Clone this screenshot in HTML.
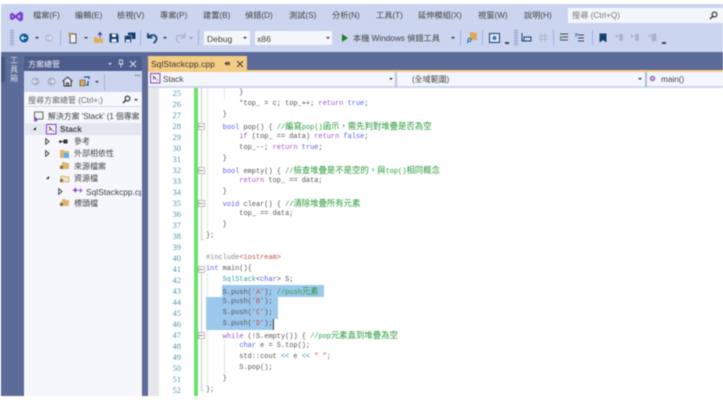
<!DOCTYPE html>
<html lang="zh-Hant"><head><meta charset="utf-8">
<style>
html,body{margin:0;padding:0;background:#fff}
#w{position:relative;width:723px;height:400px;overflow:hidden;background:#fff;font-family:"Liberation Sans","Noto Sans CJK TC",sans-serif;filter:blur(.4px)}
#w div,#w svg,#w span.a{position:absolute}
.m{top:9px;font-size:8.2px;line-height:12px;color:#444;white-space:nowrap;transform:translateY(1px)}
.t{font-size:8.2px;line-height:12px;color:#444;white-space:nowrap;transform:translateY(1px)}
.sep{width:1px;background:#9fb0dc}
.dd{width:0;height:0;border-left:2px solid transparent;border-right:2px solid transparent;border-top:2px solid #333}
.code{position:absolute;top:88px;left:206px;display:grid;grid-auto-rows:11.02px;font-family:"Liberation Mono","Noto Sans CJK TC",monospace;font-size:6.95px;color:#555}
#w .code div,#w .ln div{position:static;white-space:pre;height:11px;line-height:11px}
.ln{position:absolute;top:88px;left:160px;width:21px;text-align:right;display:grid;grid-auto-rows:11.02px;font-family:"Liberation Serif",serif;font-size:8.5px;color:#4a9bb5}
.k{color:#5560f0}.c{color:#a050d0}.g{color:#2a9a3a}.h{font-family:"Noto Sans CJK TC",sans-serif;font-size:8.4px}.y{color:#3a9ab5}.s{color:#c05050}.p{color:#888}
.fb{left:198px;width:5px;height:5px;border:1px solid #bbb;background:#fff}
</style></head><body><div id="w">
<!-- chrome backgrounds -->
<div style="left:1px;top:4px;width:722px;height:48px;background:#ccd5f0"></div>
<div style="left:1px;top:52px;width:722px;height:344px;background:#5d6b99"></div>
<!-- logo -->
<svg style="left:9px;top:9px" width="15" height="15" viewBox="0 0 15 15"><path fill-rule="evenodd" d="M1 5L3.5 3.8L6.5 6.3L11 2.5L14 4V11L11 12.5L6.5 8.7L3.5 11.2L1 10ZM3 6.3V8.7L4.5 7.5ZM11 5.5L8.5 7.5L11 9.5Z" fill="#7b3fd0"/></svg>
<!-- menu -->
<div class="m" style="left:33px">檔案(F)</div><div class="m" style="left:75px">編輯(E)</div><div class="m" style="left:117px">檢視(V)</div><div class="m" style="left:160px">專案(P)</div><div class="m" style="left:203px">建置(B)</div><div class="m" style="left:245px">偵錯(D)</div><div class="m" style="left:289px">測試(S)</div><div class="m" style="left:332px">分析(N)</div><div class="m" style="left:376px">工具(T)</div><div class="m" style="left:418px">延伸模組(X)</div><div class="m" style="left:478px">視窗(W)</div><div class="m" style="left:524px">說明(H)</div>
<div style="left:568px;top:8px;width:155px;height:15px;background:#f5f6fc"></div>
<div class="t" style="left:572px;top:9px;color:#777">搜尋 (Ctrl+Q)</div>
<svg style="left:709px;top:11px" width="9" height="9" viewBox="0 0 9 9"><circle cx="5.5" cy="3.5" r="2.4" fill="none" stroke="#333" stroke-width="1.2"/><path d="M3.8 5.2L1 8" stroke="#333" stroke-width="1.4"/></svg>
<!-- toolbar -->
<div style="left:10px;top:30px;width:4px;height:15px;background:repeating-linear-gradient(#8f9dc5 0 1px,#ccd5f0 1px 2px)"></div>
<svg style="left:19px;top:33px" width="10" height="10" viewBox="0 0 10 10"><circle cx="5" cy="5" r="4.5" fill="#0e5a96"/><path d="M2.5 5H7.5M4.5 3L2.5 5L4.5 7" stroke="#fff" fill="none"/></svg>
<div class="dd" style="left:35px;top:37px"></div>
<svg style="left:44px;top:33px" width="10" height="10" viewBox="0 0 10 10"><circle cx="5" cy="5" r="4" fill="#b9c0d2"/><path d="M2.5 5H7.5M5.5 3L7.5 5L5.5 7" stroke="#e6e9f3" fill="none"/></svg>
<div class="sep" style="left:60px;top:30px;height:15px"></div>
<svg style="left:67px;top:31px" width="12" height="13" viewBox="0 0 12 13"><path d="M3 3H9V12H3Z" fill="#eef0f5" stroke="#555"/><path d="M2 1L3 3L1 4M5 1V3" stroke="#d99a30" fill="none"/></svg>
<div class="dd" style="left:84px;top:37px"></div>
<svg style="left:93px;top:31px" width="11" height="13" viewBox="0 0 11 13"><path d="M1 6H4L5 7H10V12H1Z" fill="#e0b060"/><path d="M5 4L7 1.5L9 4M7 2V6" stroke="#3a3a8a" fill="none"/></svg>
<svg style="left:109px;top:33px" width="10" height="10" viewBox="0 0 10 10"><path d="M0.5 0.5H8L9.5 2V9.5H0.5Z" fill="#14406e"/><path d="M3 1H7V4H3ZM2.5 6H7.5V9H2.5Z" fill="#eef0f7"/></svg>
<svg style="left:124px;top:32px" width="12" height="11" viewBox="0 0 12 11"><path d="M4 0.5H11.5V7H4Z" fill="#14406e"/><path d="M0.5 3.5H7.5V10.5H0.5Z" fill="#14406e" stroke="#ccd5f0" stroke-width=".6"/><path d="M2 7.5H6V10H2Z" fill="#eef0f7"/></svg>
<div class="sep" style="left:140px;top:30px;height:15px"></div>
<svg style="left:147px;top:32px" width="11" height="12" viewBox="0 0 11 12"><path d="M1 1V5.5H5.5M1.5 5C4 2 9.5 2.5 9.5 6.5C9.5 8.5 8.5 10 6.5 11" fill="none" stroke="#14406e" stroke-width="1.7"/></svg>
<div class="dd" style="left:163px;top:37px"></div>
<svg style="left:175px;top:32px" width="11" height="12" viewBox="0 0 11 12"><path d="M10 1V5.5H5.5M9.5 5C7 2 1.5 2.5 1.5 6.5C1.5 8.5 2.5 10 4.5 11" fill="none" stroke="#aab2c8" stroke-width="1.2"/></svg>
<div class="dd" style="left:189px;top:37px;border-top-color:#8890a8"></div>
<div class="sep" style="left:198px;top:30px;height:15px"></div>
<div style="left:204px;top:31px;width:46px;height:14px;background:#f4f6fc"></div>
<div class="t" style="left:207px;top:32px;font-size:8.6px">Debug</div>
<div class="dd" style="left:243px;top:37px"></div>
<div style="left:255px;top:31px;width:77px;height:14px;background:#f4f6fc"></div>
<div class="t" style="left:257px;top:32px;font-size:8.6px">x86</div>
<div class="dd" style="left:326px;top:37px"></div>
<svg style="left:341px;top:33px" width="8" height="10" viewBox="0 0 8 10"><path d="M1 1L7 5L1 9Z" fill="#1d7d2a"/></svg>
<div class="t" style="left:353px;top:32px;font-size:8.2px">本機 Windows 偵錯工具</div>
<div class="dd" style="left:451px;top:37px"></div>
<div class="sep" style="left:460px;top:30px;height:15px"></div>
<svg style="left:466px;top:31px" width="12" height="13" viewBox="0 0 12 13"><path d="M4 1H7L8 2H11V9H4Z" fill="#dca850"/><circle cx="3.5" cy="9" r="1.6" fill="none" stroke="#1c6fb5"/><path d="M2.5 10.2L1 12" stroke="#1c6fb5"/></svg>
<div class="sep" style="left:482px;top:30px;height:15px"></div>
<svg style="left:489px;top:33px" width="11" height="10" viewBox="0 0 11 10"><rect x=".5" y=".5" width="10" height="9" fill="#dfe6f5" stroke="#14406e"/><circle cx="5.5" cy="5" r="2" fill="#2a7fc0"/></svg>
<div style="left:505px;top:42px;width:4px;height:1.5px;background:#444"></div>
<div style="left:514px;top:30px;width:4px;height:15px;background:repeating-linear-gradient(#8f9dc5 0 1px,#ccd5f0 1px 2px)"></div>
<svg style="left:521px;top:32px" width="11" height="11" viewBox="0 0 11 11"><path d="M1 1V9H10M3 5H10V9H3Z" fill="none" stroke="#14406e"/></svg>
<svg style="left:538px;top:32px" width="11" height="11" viewBox="0 0 11 11"><path d="M1 4H10M1 7H10M3 1V10M7 1V10" stroke="#b0b8cc"/></svg>
<div class="sep" style="left:553px;top:30px;height:15px"></div>
<svg style="left:559px;top:33px" width="10" height="9" viewBox="0 0 10 9"><path d="M1 1H9M3 4H9M1 7H9" stroke="#444"/><path d="M1 3V6L3 4.5Z" fill="#1d7d2a"/></svg>
<svg style="left:575px;top:33px" width="10" height="9" viewBox="0 0 10 9"><path d="M3 2H9M3 5H9M3 8H9" stroke="#444"/><path d="M0 1H3M0 3H2" stroke="#1c6fb5"/></svg>
<div class="sep" style="left:592px;top:30px;height:15px"></div>
<svg style="left:599px;top:33px" width="8" height="10" viewBox="0 0 8 10"><path d="M0.5 0.5H7.5V9.5L4 7L0.5 9.5Z" fill="#14406e"/></svg>
<svg style="left:614px;top:33px" width="10" height="9" viewBox="0 0 10 9"><path d="M5 1H9V8H5ZM1 3L4 1V5Z" fill="#aab3c8"/></svg>
<svg style="left:630px;top:33px" width="10" height="9" viewBox="0 0 10 9"><path d="M5 1H9V8H5ZM1 1L4 3L1 5Z" fill="#aab3c8"/></svg>
<svg style="left:647px;top:33px" width="10" height="9" viewBox="0 0 10 9"><path d="M5 1H9V8H5ZM1 1L4 4M4 1L1 4" fill="#aab3c8" stroke="#aab3c8" stroke-width=".7"/></svg>
<div style="left:662px;top:42px;width:4px;height:1.5px;background:#444"></div>
<!-- left toolbox tab -->
<div style="left:1px;top:57px;width:4px;height:25px;background:#47547f"></div>
<div style="left:9px;top:56px;width:10px;font-size:8px;line-height:9px;color:#d5dbee;text-align:center">工具箱</div>
<!-- solution explorer -->
<div style="left:24px;top:56px;width:118px;height:340px;background:#f6f7fd"></div>
<div style="left:24px;top:56px;width:118px;height:15px;background:#4d5c8c"></div>
<div class="t" style="left:28px;top:58px;color:#f0f2fa;font-size:8px">方案總管</div>
<div class="dd" style="left:108px;top:63px;border-top-color:#d5dbee"></div>
<svg style="left:117px;top:59px" width="8" height="9" viewBox="0 0 8 9"><path d="M2.5 1H5.5V5H2.5ZM1.5 5H6.5M4 5V8.5" fill="none" stroke="#d5dbee" stroke-width=".9"/></svg>
<svg style="left:129px;top:60px" width="8" height="8" viewBox="0 0 8 8"><path d="M1 1L7 7M7 1L1 7" stroke="#d5dbee" stroke-width="1.1"/></svg>
<div style="left:24px;top:71px;width:118px;height:21px;background:#ccd5f0"></div>
<svg style="left:31px;top:77px" width="9" height="9" viewBox="0 0 9 9"><circle cx="4.5" cy="4.5" r="4" fill="#aab2c6"/><path d="M2 4.5H7M4 2.5L2 4.5L4 6.5" stroke="#e6e9f3" fill="none"/></svg>
<svg style="left:47px;top:77px" width="9" height="9" viewBox="0 0 9 9"><circle cx="4.5" cy="4.5" r="4" fill="#aab2c6"/><path d="M2 4.5H7M5 2.5L7 4.5L5 6.5" stroke="#e6e9f3" fill="none"/></svg>
<svg style="left:62px;top:76px" width="11" height="11" viewBox="0 0 11 11"><path d="M0.5 5.5L5.5 1L10.5 5.5M2 5V10H9V5M4.5 10V7H6.5V10" fill="#eef0f7" stroke="#333"/></svg>
<svg style="left:79px;top:76px" width="12" height="11" viewBox="0 0 12 11"><path d="M1 4H6V10H1Z" fill="#dca850" stroke="#444" stroke-width=".6"/><path d="M5 1H10V3M9 5V9H7" fill="none" stroke="#14507e" stroke-width="1.2"/></svg>
<div class="dd" style="left:95px;top:81px"></div>
<div class="sep" style="left:104px;top:75px;height:15px"></div>
<div style="left:135px;top:75px;width:5px;height:1px;border-top:1px dotted #444"></div>
<div style="left:25px;top:92px;width:116px;height:14px;background:#f7f8fd;border-bottom:1px solid #cfd6ee"></div>
<div class="t" style="left:28px;top:94px;color:#666;font-size:8px">搜尋方案總管 (Ctrl+;)</div>
<svg style="left:122px;top:95px" width="9" height="9" viewBox="0 0 9 9"><circle cx="5.5" cy="3.5" r="2.4" fill="none" stroke="#333" stroke-width="1.2"/><path d="M3.8 5.2L1 8" stroke="#333" stroke-width="1.4"/></svg>
<div class="dd" style="left:134px;top:99px"></div>
<div style="left:25px;top:123px;width:116px;height:12px;background:#e4e6f1"></div>
<svg style="left:33px;top:111px" width="11" height="11" viewBox="0 0 11 11"><rect x="1.5" y="1" width="8.5" height="7" fill="#f2f3f8" stroke="#444" stroke-width=".8"/><path d="M2 6L4 9.5L1 10" fill="#8a3fc9" stroke="#8a3fc9"/></svg>
<div class="t" style="left:48px;top:110px;font-size:7.9px;width:93px;overflow:hidden">解決方案 'Stack' (1 個專案</div>
<div style="left:33px;top:127px;border-left:3px solid transparent;border-bottom:3px solid #222"></div>
<svg style="left:46px;top:124px" width="11" height="11" viewBox="0 0 11 11"><rect x=".5" y=".5" width="9.5" height="9.5" fill="#f4f0f8" stroke="#8a3fc9"/><path d="M3 3L6 6M7 7H8M3 6H4" stroke="#333"/></svg>
<div class="t" style="left:60px;top:123px;font-weight:bold;font-size:8.2px">Stack</div>
<svg style="left:45px;top:138px" width="5" height="7" viewBox="0 0 5 7"><path d="M.7 .7L4 3.5L.7 6.3Z" fill="#fff" stroke="#333" stroke-width=".9"/></svg>
<svg style="left:59px;top:139px" width="10" height="5" viewBox="0 0 10 5"><rect x="0" y="1.5" width="2.4" height="2.4" fill="#333"/><rect x="4.5" y="0.5" width="4" height="4" fill="#333"/><path d="M2 2.5H5" stroke="#333"/></svg>
<div class="t" style="left:74px;top:135px;font-size:8px">參考</div>
<svg style="left:45px;top:150px" width="5" height="7" viewBox="0 0 5 7"><path d="M.7 .7L4 3.5L.7 6.3Z" fill="#fff" stroke="#333" stroke-width=".9"/></svg>
<svg style="left:60px;top:148px" width="10" height="11" viewBox="0 0 10 11"><path d="M0 2H3.5L4.5 3H9V10H0Z" fill="#dcb574"/><rect x="4" y="5" width="5" height="5" fill="#5db0e8"/></svg>
<div class="t" style="left:74px;top:147px;font-size:8px">外部相依性</div>
<svg style="left:60px;top:160px" width="10" height="10" viewBox="0 0 10 10"><path d="M0 5H2V2H5L6 3H9V9H0Z" fill="#dcb574"/><path d="M0 6H3V9H0Z" fill="#8a6d36"/></svg>
<div class="t" style="left:74px;top:160px;font-size:8px">來源檔案</div>
<div style="left:46px;top:176px;border-left:3px solid transparent;border-bottom:3px solid #222"></div>
<svg style="left:60px;top:173px" width="10" height="10" viewBox="0 0 10 10"><path d="M1 3H4L5 4H9V9H1Z" fill="#f0e4c8" stroke="#cfa860" stroke-width=".8"/><path d="M0 6H3V9H0Z" fill="#8a6d36"/></svg>
<div class="t" style="left:74px;top:172px;font-size:8px">資源檔</div>
<svg style="left:58px;top:188px" width="5" height="7" viewBox="0 0 5 7"><path d="M.7 .7L4 3.5L.7 6.3Z" fill="#fff" stroke="#333" stroke-width=".9"/></svg>
<div style="left:72px;top:185px;font-size:8px;line-height:12px;color:#8a3fc9;font-weight:bold;letter-spacing:-.5px">✦+</div>
<div class="t" style="left:86px;top:185px;font-size:8.4px;width:55px;overflow:hidden">SqlStackcpp.cpp</div>
<svg style="left:60px;top:197px" width="10" height="10" viewBox="0 0 10 10"><path d="M0 5H2V2H5L6 3H9V9H0Z" fill="#dcb574"/><path d="M0 6H3V9H0Z" fill="#8a6d36"/></svg>
<div class="t" style="left:74px;top:197px;font-size:8px">標頭檔</div>
<!-- editor tab -->
<div style="left:148px;top:56px;width:99px;height:15px;background:#f5cc84"></div>
<div class="t" style="left:151px;top:57px;font-size:8.4px;color:#333;letter-spacing:.1px">SqlStackcpp.cpp</div>
<svg style="left:224px;top:60px" width="7" height="7" viewBox="0 0 7 7"><path d="M2 2V5M2 3.5H6M0.5 3.5H2" stroke="#444"/><rect x="3" y="2.2" width="2.5" height="2.6" fill="none" stroke="#444" stroke-width=".7"/></svg>
<svg style="left:236px;top:60px" width="8" height="8" viewBox="0 0 8 8"><path d="M1 1L7 7M7 1L1 7" stroke="#444" stroke-width="1.1"/></svg>
<div style="left:148px;top:70px;width:575px;height:2px;background:#f5cc84"></div>
<!-- nav bar -->
<div style="left:148px;top:72px;width:575px;height:15px;background:#f4f6fd"></div>
<div style="left:148px;top:86px;width:575px;height:1.5px;background:#cdd6f0"></div>
<svg style="left:150px;top:73px" width="11" height="11" viewBox="0 0 11 11"><rect x=".5" y=".5" width="9.5" height="9.5" fill="#f4f0f8" stroke="#8a3fc9"/><path d="M3 3L6 6M7 7H8M3 6H4" stroke="#333"/></svg>
<div class="t" style="left:163px;top:73px;font-size:8.2px">Stack</div>
<div class="dd" style="left:389px;top:78px"></div>
<div style="left:395px;top:72px;width:2px;height:15px;background:#bac5e6"></div>
<div class="t" style="left:412px;top:73px;font-size:8px">(全域範圍)</div>
<div class="dd" style="left:638px;top:78px"></div>
<div style="left:645px;top:72px;width:2px;height:15px;background:#a9b9e2"></div>
<svg style="left:649px;top:75px" width="7" height="7" viewBox="0 0 7 7"><circle cx="3.5" cy="3.5" r="2.8" fill="#a070c8"/><circle cx="3.5" cy="3.5" r="1" fill="#f0e8f8"/></svg>
<div class="t" style="left:661px;top:73px;font-size:8.2px">main()</div>
<!-- editor -->
<div style="left:142px;top:87.5px;width:6px;height:308.5px;background:#5d6b99"></div>
<div style="left:148px;top:87.5px;width:575px;height:312.5px;background:#fff"></div>
<div style="left:148px;top:87.5px;width:11px;height:308.5px;background:#e6e7e9"></div>
<div style="left:193.5px;top:87.5px;width:4px;height:308.5px;background:#6ee06e"></div>
<!-- selection -->
<div style="left:222px;top:285px;width:102px;height:11.5px;background:#9cc8ee"></div>
<div style="left:206px;top:296.5px;width:72px;height:22px;background:#9cc8ee"></div>
<div style="left:206px;top:318.5px;width:67px;height:11px;background:#9cc8ee"></div>
<div style="left:273px;top:319px;width:1px;height:11px;background:#333"></div>
<!-- fold lines -->
<div style="left:201px;top:87.5px;width:1px;height:152px;background:#c8c8c8"></div>
<div style="left:201px;top:239px;width:3px;height:1px;background:#c8c8c8"></div>
<div style="left:201px;top:268px;width:1px;height:123px;background:#c8c8c8"></div>
<div style="left:201px;top:390px;width:3px;height:1px;background:#c8c8c8"></div>
<div class="fb" style="top:123px"></div><div class="fb" style="top:167px"></div><div class="fb" style="top:200px"></div><div class="fb" style="top:266px"></div><div class="fb" style="top:332px"></div>
<div style="left:199px;top:125.5px;width:4px;height:1px;background:#888"></div><div style="left:199px;top:169.5px;width:4px;height:1px;background:#888"></div><div style="left:199px;top:202.5px;width:4px;height:1px;background:#888"></div><div style="left:199px;top:268.5px;width:4px;height:1px;background:#888"></div><div style="left:199px;top:334.5px;width:4px;height:1px;background:#888"></div>
<!-- indent guides -->
<div style="left:207px;top:87.5px;width:0;height:143px;border-left:1px dotted #ccc"></div>
<div style="left:224px;top:87.5px;width:0;height:11px;border-left:1px dotted #ccc"></div>
<div style="left:207px;top:274px;width:0;height:110px;border-left:1px dotted #ccc"></div>
<div style="left:224px;top:340px;width:0;height:33px;border-left:1px dotted #ccc"></div>
<div class="ln"><div>25</div><div>26</div><div>27</div><div>28</div><div>29</div><div>30</div><div>31</div><div>32</div><div>33</div><div>34</div><div>35</div><div>36</div><div>37</div><div>38</div><div>39</div><div>40</div><div>41</div><div>42</div><div>43</div><div>44</div><div>45</div><div>46</div><div>47</div><div>48</div><div>49</div><div>50</div><div>51</div><div>52</div></div>
<div class="code">
<div>        }</div>
<div>        *top_ = c; top_++; <span class="c">return</span> <span class="k">true</span>;</div>
<div>    }</div>
<div>    <span class="k">bool</span> pop() { <span class="g">//<span class="h">編寫</span>pop()<span class="h">函示，需先判對堆疊是否為空</span></span></div>
<div>        <span class="c">if</span> (top_ == data) <span class="c">return</span> <span class="k">false</span>;</div>
<div>        top_--; <span class="c">return</span> <span class="k">true</span>;</div>
<div>    }</div>
<div>    <span class="k">bool</span> empty() { <span class="g">//<span class="h">檢查堆疊是不是空的，與</span>top()<span class="h">相同概念</span></span></div>
<div>        <span class="c">return</span> top_ == data;</div>
<div>    }</div>
<div>    <span class="k">void</span> clear() { <span class="g">//<span class="h">清除堆疊所有元素</span></span></div>
<div>        top_ == data;</div>
<div>    }</div>
<div>};</div>
<div> </div>
<div><span class="p">#include</span><span class="s">&lt;iostream&gt;</span></div>
<div><span class="k">int</span> main(){</div>
<div>    <span class="y">SqlStack</span>&lt;<span class="k">char</span>&gt; S;</div>
<div>    S.push(<span class="s">'A'</span>); <span class="g">//push<span class="h">元素</span></span></div>
<div>    S.push(<span class="s">'B'</span>);</div>
<div>    S.push(<span class="s">'C'</span>);</div>
<div>    S.push(<span class="s">'D'</span>);</div>
<div>    <span class="c">while</span> (!S.empty()) { <span class="g">//pop<span class="h">元素直到堆疊為空</span></span></div>
<div>        <span class="k">char</span> e = S.top();</div>
<div>        std::cout <span class="y">&lt;&lt;</span> e <span class="y">&lt;&lt;</span> <span class="s">" "</span>;</div>
<div>        S.pop();</div>
<div>    }</div>
<div>};</div>
</div>
</div></body></html>
